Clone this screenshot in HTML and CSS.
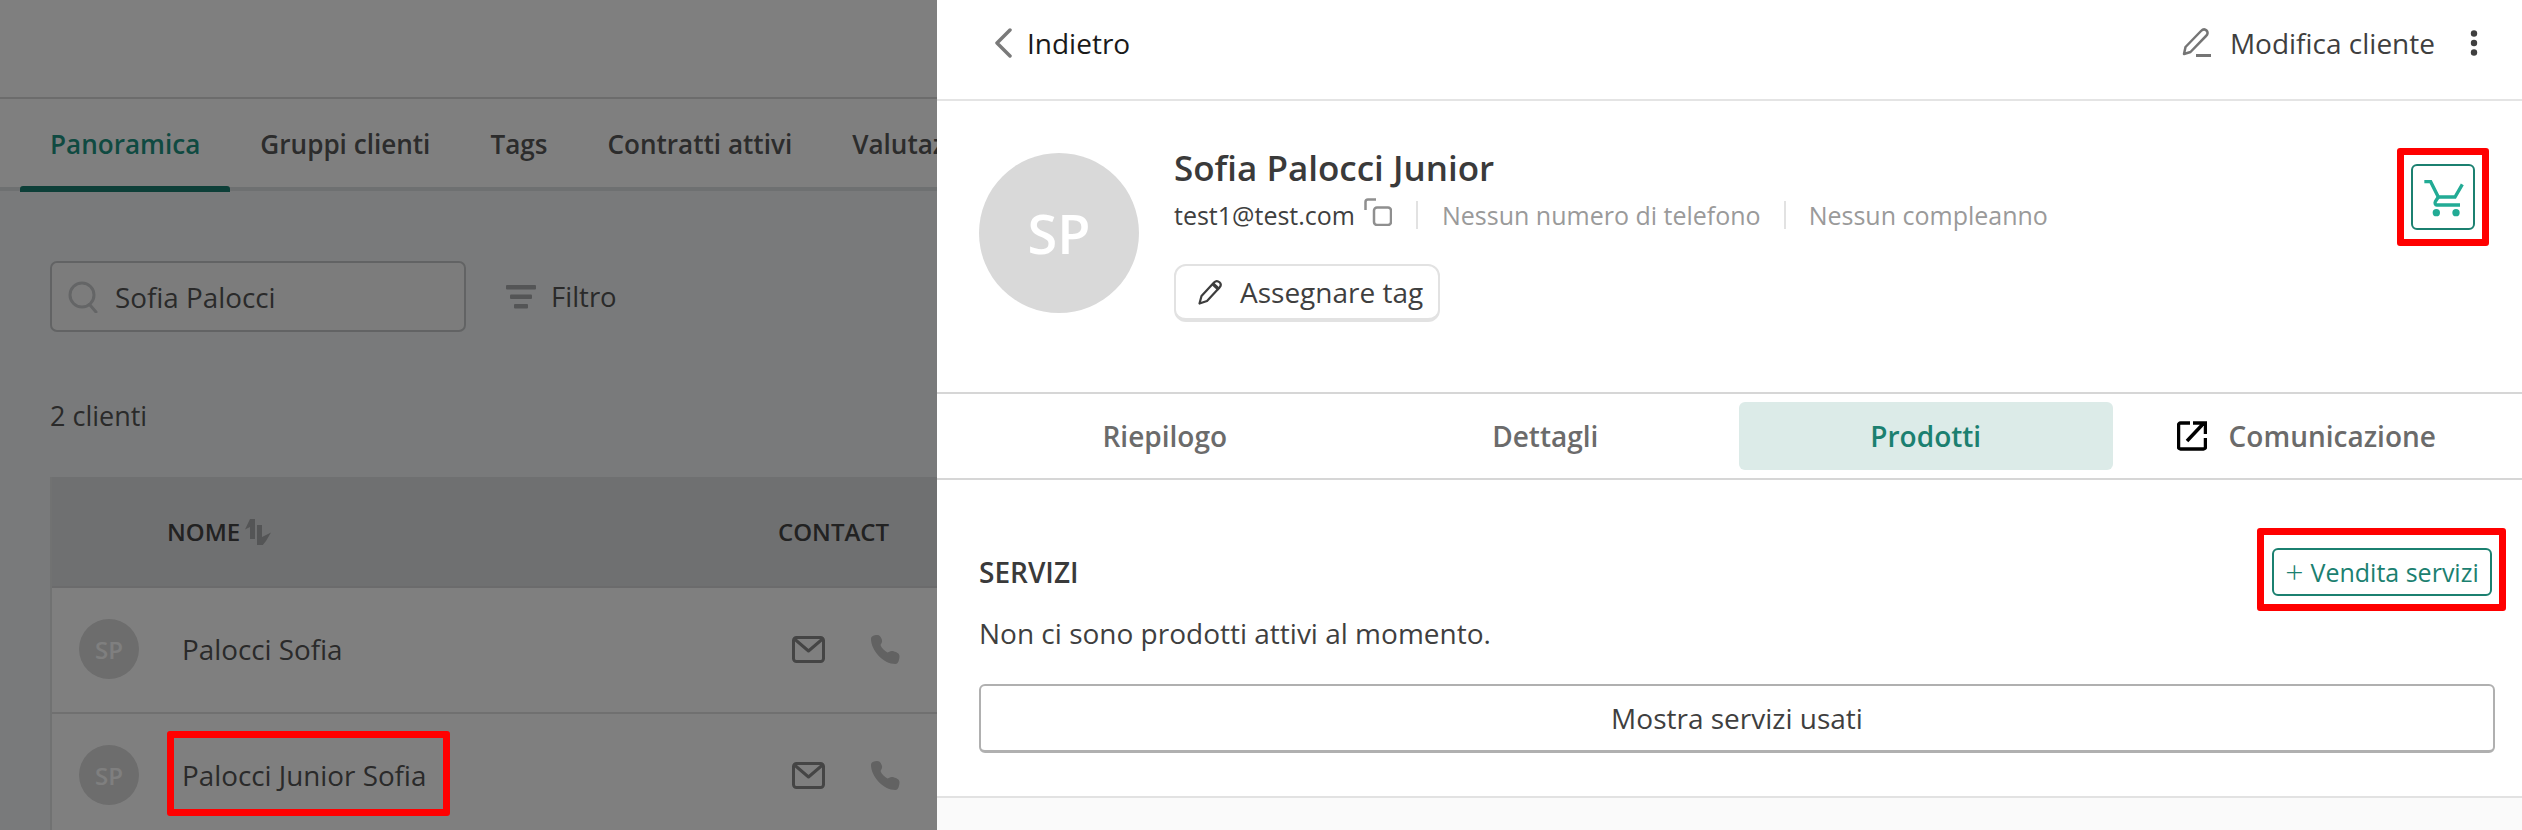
FILE: index.html
```html
<!DOCTYPE html>
<html lang="it">
<head>
<meta charset="utf-8">
<title>Cliente</title>
<link rel="stylesheet" href="styles.css">
</head>
<body>
<div class="page">
  <main class="main">
    <div class="topbar"></div>
    <nav class="main-tabs">
      <a class="main-tab active">Panoramica</a>
      <a class="main-tab">Gruppi clienti</a>
      <a class="main-tab">Tags</a>
      <a class="main-tab">Contratti attivi</a>
      <a class="main-tab">Valutazioni</a>
    </nav>
    <div class="toolbar">
      <div class="search">
        <svg class="search-icon" viewBox="0 0 30 32" fill="none" stroke="#c8cacc" stroke-width="3"><ellipse cx="14" cy="14" rx="12" ry="12"/><path d="M22 24l6 7" stroke-linecap="round"/></svg>
        <span>Sofia Palocci</span>
      </div>
      <div class="filter">
        <svg class="filter-icon" viewBox="0 0 30 24" fill="#a8aaac"><rect x="0" y="0" width="30" height="4.5" rx="1"/><rect x="4" y="9.5" width="22" height="4.5" rx="1"/><rect x="8" y="19" width="14" height="4.5" rx="1"/></svg>
        <span>Filtro</span>
      </div>
    </div>
    <div class="count">2 clienti</div>
    <section class="table">
      <div class="thead">
        <div class="th-name">NOME
          <svg class="sort-icon" viewBox="0 0 26 26" fill="#a8aaac"><path d="M5 0h5v20H5V8l-5 2.500zM12 26V6h5v12l9-4.500-5 8.500-4 5z"/></svg>
        </div>
        <div class="th-contact">CONTACT</div>
      </div>
      <div class="trow">
        <div class="small-avatar">SP</div>
        <div class="cell-name">Palocci Sofia</div>
        <div class="cell-contact">
          <svg class="mail-icon" viewBox="0 0 33 27" fill="none" stroke="#8a8a8a" stroke-width="3" stroke-linejoin="round"><rect x="1.5" y="1.5" width="30" height="24" rx="3"/><path d="M2.5 3l14 12 14-12"/></svg>
          <svg class="phone-icon" viewBox="0 0 29 29" fill="#c4c4c4"><path d="M0 4c0-3 3-4 6-4 3 0 4 2 5 5 .6 2-1 4-1.500 5 1 3 4 6 7 7.500 1-.5 3-2 5-1.500 3 .7 7 2 7 5 0 3-1 8-4 8C12 29 0 15 0 4z"/></svg>
        </div>
      </div>
      <div class="trow">
        <div class="small-avatar">SP</div>
        <div class="cell-name">Palocci Junior Sofia</div>
        <div class="cell-contact">
          <svg class="mail-icon" viewBox="0 0 33 27" fill="none" stroke="#8a8a8a" stroke-width="3" stroke-linejoin="round"><rect x="1.5" y="1.5" width="30" height="24" rx="3"/><path d="M2.5 3l14 12 14-12"/></svg>
          <svg class="phone-icon" viewBox="0 0 29 29" fill="#c4c4c4"><path d="M0 4c0-3 3-4 6-4 3 0 4 2 5 5 .6 2-1 4-1.500 5 1 3 4 6 7 7.500 1-.5 3-2 5-1.500 3 .7 7 2 7 5 0 3-1 8-4 8C12 29 0 15 0 4z"/></svg>
        </div>
      </div>
    </section>
  </main>
  <div class="scrim"></div>
  <aside class="drawer">
    <header class="drawer-head">
      <div class="back">
        <svg class="chevron" viewBox="0 0 20 30" fill="none" stroke="#7a7a7a" stroke-width="3.500" stroke-linecap="round" stroke-linejoin="round"><path d="M16 2L3 15l13 13"/></svg>
        <span>Indietro</span>
      </div>
      <div class="head-actions">
        <svg class="edit-icon" viewBox="0 0 30 29" fill="none" stroke="#757575" stroke-width="2.500" stroke-linejoin="round"><path d="M2 26l1.500-7L19 3c2-2 4-2 5.500-.5s1.500 3.500-.5 5.500L8.500 24z"/><path d="M14 27.500h15" stroke-width="3"/></svg>
        <span class="edit-label">Modifica cliente</span>
        <svg class="kebab" viewBox="0 0 8 26" fill="#3f3f3f"><circle cx="4" cy="3.500" r="3.200"/><circle cx="4" cy="13" r="3.200"/><circle cx="4" cy="22.500" r="3.200"/></svg>
      </div>
    </header>
    <section class="profile">
      <div class="big-avatar">SP</div>
      <div class="profile-info">
        <h1 class="profile-name">Sofia Palocci Junior</h1>
        <div class="profile-meta">
          <span class="email">test1@test.com</span>
          <svg class="copy-icon" viewBox="0 0 28 28" fill="none" stroke="#8f8f8f" stroke-width="2.500"><rect x="10" y="9.500" width="17" height="17.500" rx="3"/><path d="M1.500 12V4c0-1.500 1-2.500 2.500-2.500h8"/></svg>
          <span class="meta-sep"></span>
          <span class="muted">Nessun numero di telefono</span>
          <span class="meta-sep second"></span>
          <span class="muted">Nessun compleanno</span>
        </div>
        <button class="tag-btn">
          <svg class="tag-pencil" viewBox="0 0 25 26" fill="none" stroke="#3d3d3d" stroke-width="2.200" stroke-linejoin="round"><path d="M1.500 24.500l2-7.500L16 3.500c2-2 3.500-2 5.500-.2s1.500 3.500 0 5.200L9 22z"/><path d="M15 5l6 5.500" stroke-width="3.500"/></svg>
          <span>Assegnare tag</span>
        </button>
      </div>
      <button class="cart-btn">
        <svg class="cart-icon" viewBox="120 110 135 120" fill="none" stroke="#22ab95" stroke-width="10"><path d="M130 124h19l23 46h50l22-38"/><path d="M172 170l-9 14c-2 4 0 10 4 10h70" stroke-width="10"/><circle cx="166" cy="217" r="11" fill="#22ab95" stroke="none"/><circle cx="225" cy="217" r="11" fill="#22ab95" stroke="none"/></svg>
      </button>
    </section>
    <nav class="drawer-tabs">
      <a class="drawer-tab">Riepilogo</a>
      <a class="drawer-tab">Dettagli</a>
      <a class="drawer-tab selected">Prodotti</a>
      <a class="drawer-tab">
        <svg class="ext-icon" viewBox="0 0 30 30" fill="none" stroke="#000" stroke-width="3.500"><path d="M13 2H3.500C2.500 2 1.500 3 1.500 4v22c0 1 1 2 2 2h23c1 0 2-1 2-2v-9"/><path d="M10 20L26 3M16 2h12.500v11"/></svg>
        <span>Comunicazione</span>
      </a>
    </nav>
    <section class="services">
      <div class="services-head">
        <h2 class="services-title">SERVIZI</h2>
        <button class="sell-btn"><span class="plus">+</span><span class="sell-label">Vendita servizi</span></button>
      </div>
      <p class="empty">Non ci sono prodotti attivi al momento.</p>
      <button class="used-btn">Mostra servizi usati</button>
    </section>
    <div class="drawer-foot"></div>
  </aside>
  <div class="mark mark-name"></div>
  <div class="mark mark-cart"></div>
  <div class="mark mark-sell"></div>
</div>
</body>
</html>
```
FILE: styles.css
```css
* { box-sizing: border-box; }
html, body { margin: 0; padding: 0; background: #fff; }
body { font-family: "Open Sans", "Noto Sans", sans-serif; color: #333; }
button { font-family: inherit; background: #fff; cursor: pointer; padding: 0; }
h1, h2, p { margin: 0; }

.page { position: relative; width: 2522px; height: 830px; overflow: hidden; }

/* Background page */
.main { width: 937px; height: 830px; background: #f3f5f6; overflow: hidden; }
.topbar { height: 99px; background: #fff; border-bottom: 2px solid #d8d8d8; }
.main-tabs { display: flex; height: 92px; padding-left: 20px; background: #fff; border-bottom: 4px solid #dde0e2; white-space: nowrap; }
.main-tab { position: relative; padding: 0 30px; font-size: 26.1px; font-weight: 600; line-height: 92px; height: 92px; color: #585858; margin-top: -1px; }
.main-tab.active { color: #1f9483; }
.main-tab.active::after { content: ""; position: absolute; left: 0; right: 0; bottom: -2px; height: 6px; border-radius: 3px 3px 0 0; background: #1a7f70; }
.toolbar { display: flex; align-items: center; margin: 70px 0 0 50px; height: 71px; }
.search { display: flex; align-items: center; width: 416px; height: 71px; padding-left: 16px; background: #f9f9f9; border: 2px solid #c4c6c8; border-radius: 7px; font-size: 27.8px; color: #555; }
.search-icon { width: 30px; height: 32px; margin-right: 17px; }
.filter { display: flex; align-items: center; margin-left: 40px; font-size: 27.5px; color: #555; }
.filter-icon { width: 30px; height: 24px; margin-right: 15px; }
.count { margin: 68px 0 0 50px; height: 34px; font-size: 27px; line-height: 32px; color: #555; }
.table { margin: 43px 0 0 50px; border-left: 2px solid #e3e4e5; }
.thead { display: grid; grid-template-columns: 116px 612px 1fr; height: 111px; align-items: center; background: #dfe0e2; border-bottom: 2px solid #d6d7d8; font-size: 24px; font-weight: 600; color: #444; }
.th-name { grid-column: 2; display: flex; align-items: center; gap: 5px; margin-left: -1px; }
.sort-icon { width: 26px; height: 26px; }
.th-contact { grid-column: 3; margin-left: -2px; }
.trow { display: grid; grid-template-columns: 116px 612px 1fr; height: 126px; align-items: center; background: #fff; border-bottom: 2px solid #e0e0e0; font-size: 27.8px; color: #555; padding-bottom: 2px; }
.small-avatar { width: 60px; height: 60px; margin-left: 27px; border-radius: 50%; background: #dadada; color: #fff; font-size: 24px; font-weight: 600; display: flex; align-items: center; justify-content: center; }
.cell-name { padding-left: 14px; line-height: 34px; }
.cell-contact { display: flex; align-items: center; padding-left: 12px; gap: 46px; }
.mail-icon { width: 33px; height: 27px; }
.phone-icon { width: 29px; height: 29px; }
.scrim { position: absolute; left: 0; top: 0; width: 937px; height: 830px; background: rgba(0, 0, 0, .5); }

/* Drawer */
.drawer { position: absolute; left: 937px; top: 0; width: 1585px; height: 830px; background: #fff; display: flex; flex-direction: column; }
.drawer-head { display: flex; justify-content: space-between; align-items: center; height: 101px; flex: none; padding: 0 44px 14px 57px; border-bottom: 2px solid #e4e4e4; }
.back { display: flex; align-items: center; font-size: 28px; color: #1a1a1a; }
.chevron { width: 20px; height: 30px; margin-right: 13px; }
.head-actions { display: flex; align-items: center; }
.edit-icon { width: 30px; height: 29px; margin-right: 18px; }
.edit-label { font-size: 28px; color: #3f3f3f; }
.kebab { width: 8px; height: 26px; margin-left: 35px; }

.profile { display: flex; align-items: flex-start; height: 293px; flex: none; padding: 45px 47px 0 42px; border-bottom: 2px solid #d6d6d6; }
.big-avatar { width: 160px; height: 160px; margin-top: 7px; border-radius: 50%; background: #d9d9d9; color: #fff; font-size: 54px; font-weight: 600; display: flex; align-items: center; justify-content: center; flex: none; }
.profile-info { margin-left: 35px; flex: 1; }
.profile-name { font-size: 35px; font-weight: 600; line-height: 44px; color: #3a3a3a; }
.profile-meta { display: flex; align-items: center; height: 32px; margin-top: 9px; font-size: 25px; }
.email { color: #3f3f3f; }
.copy-icon { width: 28px; height: 28px; margin: -6px 0 0 9px; }
.meta-sep { width: 2px; height: 28px; background: #e2e2e2; margin: 0 24px; }
.meta-sep.second { margin: 0 23px; }
.muted { color: #9a9a9a; }
.tag-btn { display: flex; align-items: center; height: 58px; width: 266px; margin-top: 33px; padding-left: 22px; border: 2px solid #e2e2e2; border-bottom-width: 4px; border-radius: 12px; font-size: 28px; color: #3f3f3f; }
.tag-pencil { width: 25px; height: 26px; margin-right: 17px; }
.cart-btn { width: 64px; height: 66px; margin-top: 18px; flex: none; border: 2px solid #1b8070; border-radius: 6px; display: flex; align-items: center; justify-content: center; }
.cart-icon { width: 45px; height: 40px; }

.drawer-tabs { display: grid; grid-template-columns: repeat(4, 1fr); gap: 7px; height: 86px; flex: none; padding: 8px 29px 8px 41px; border-bottom: 2px solid #d6d6d6; }
.drawer-tab { display: flex; align-items: center; justify-content: center; height: 68px; font-size: 28px; font-weight: 600; color: #6b6b6b; border-radius: 6px; }
.drawer-tab.selected { background: #dcebe8; color: #1b8070; }
.ext-icon { width: 30px; height: 30px; margin-right: 22px; }

.services { height: 316px; flex: none; padding: 68px 27px 0 42px; }
.services-head { display: flex; justify-content: space-between; align-items: center; height: 48px; }
.services-title { font-size: 28px; font-weight: 600; color: #3a3a3a; }
.sell-btn { display: flex; align-items: center; justify-content: center; gap: 6px; width: 220px; height: 48px; margin-right: 3px; border: 2px solid #1b8070; border-radius: 6px; font-size: 25px; color: #1b8070; white-space: nowrap; }
.plus { font-size: 32px; line-height: 1; font-weight: 300; }
.sell-label { margin-left: 1px; }
.empty { margin-top: 20px; font-size: 28px; line-height: 34px; color: #3f3f3f; }
.used-btn { display: block; width: 100%; height: 69px; margin-top: 34px; border: 2px solid #b0b0b0; border-bottom-width: 3px; border-radius: 6px; font-size: 28px; color: #3f3f3f; }
.drawer-foot { flex: 1; background: #fafafa; border-top: 2px solid #e2e2e2; }

/* Annotation rectangles */
.mark { position: absolute; border: 7px solid #f00; border-radius: 3px; }
.mark-name { left: 167px; top: 731px; width: 283px; height: 85px; }
.mark-cart { left: 2397px; top: 148px; width: 92px; height: 98px; }
.mark-sell { left: 2257px; top: 528px; width: 249px; height: 83px; }
```
